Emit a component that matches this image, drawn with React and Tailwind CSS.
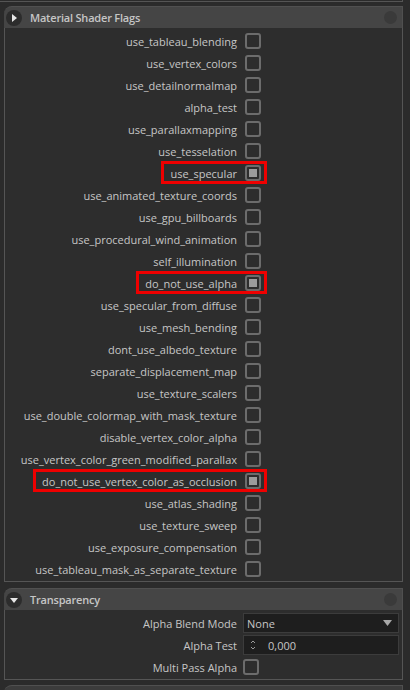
import React from "react";

const flags = [
  ["use_tableau_blending", false, false],
  ["use_vertex_colors", false, false],
  ["use_detailnormalmap", false, false],
  ["alpha_test", false, false],
  ["use_parallaxmapping", false, false],
  ["use_tesselation", false, false],
  ["use_specular", true, true],
  ["use_animated_texture_coords", false, false],
  ["use_gpu_billboards", false, false],
  ["use_procedural_wind_animation", false, false],
  ["self_illumination", false, false],
  ["do_not_use_alpha", true, true],
  ["use_specular_from_diffuse", false, false],
  ["use_mesh_bending", false, false],
  ["dont_use_albedo_texture", false, false],
  ["separate_displacement_map", false, false],
  ["use_texture_scalers", false, false],
  ["use_double_colormap_with_mask_texture", false, false],
  ["disable_vertex_color_alpha", false, false],
  ["use_vertex_color_green_modified_parallax", false, false],
  ["do_not_use_vertex_color_as_occlusion", true, true],
  ["use_atlas_shading", false, false],
  ["use_texture_sweep", false, false],
  ["use_exposure_compensation", false, false],
  ["use_tableau_mask_as_separate_texture", false, false],
];

function Checkbox({ checked }) {
  return (
    <div className="w-4 h-4 shrink-0 rounded-[3px] border-2 border-[#6c6c6c] flex items-center justify-center">
      {checked && <div className="w-2 h-2 bg-[#9c9c9c]" />}
    </div>
  );
}

function FlagRow({ label, checked, highlight }) {
  return (
    <div className="h-[22px] flex items-center justify-end w-[256px]">
      <div className="relative flex items-center gap-2 h-full">
        <span className="text-[11px] text-[#c6c6c6] leading-none">{label}</span>
        <Checkbox checked={checked} />
        {highlight && (
          <span className="absolute -left-[9px] -right-[6px] top-[-1px] bottom-0 border-[3px] border-[#ee0000]" />
        )}
      </div>
    </div>
  );
}

function Header({ title, open }) {
  return (
    <div className="h-[22px] bg-[#454545] rounded-tl-[8px] border-t border-r border-[#505050] flex items-center pl-[2px] pr-[5px]">
      <div className="w-4 h-4 rounded-full bg-[#2c2c2c] flex items-center justify-center">
        {open ? (
          <svg width="10" height="10" viewBox="0 0 10 10">
            <path d="M1 3 L9 3 L5 8 Z" fill="#e6e6e6" />
          </svg>
        ) : (
          <svg width="10" height="10" viewBox="0 0 10 10">
            <path d="M3 1 L8 5 L3 9 Z" fill="#e6e6e6" />
          </svg>
        )}
      </div>
      <span className="ml-[8px] text-[11px] font-semibold tracking-[-0.2px] text-[#c6c6c6] leading-none">{title}</span>
      <div className="ml-auto w-[13px] h-[13px] rounded-full bg-[#3a3a3a]" />
    </div>
  );
}

function PropRow({ label, children }) {
  return (
    <div className="h-[22px] flex items-center">
      <div className="w-[232px] text-right text-[11px] text-[#c6c6c6] leading-none">{label}</div>
      <div className="ml-[6px] flex-1 pr-[3px] flex items-center">{children}</div>
    </div>
  );
}

export default function App() {
  return (
    <div
      className="w-[410px] h-[690px] bg-[#2b2b2b] overflow-hidden"
      style={{ fontFamily: '"Open Sans", "Noto Sans", sans-serif' }}
    >
      <div className="h-[2px] w-[403px] border-b border-r border-[#555555]" />
      <div className="ml-[4px] w-[399px] mt-[4px]">
        <Header title="Material Shader Flags" open={false} />
        <div className="border-l border-r border-b border-[#555555] bg-[#2d2d2d] pt-[2px] pb-[1px]">
          {flags.map(([l, c, h]) => (
            <FlagRow key={l} label={l} checked={c} highlight={h} />
          ))}
        </div>
      </div>
      <div className="ml-[4px] w-[399px] mt-[6px]">
        <Header title="Transparency" open={true} />
        <div className="border-l border-r border-b border-[#555555] bg-[#2d2d2d] pt-[2px] pb-[1px]">
          <PropRow label="Alpha Blend Mode">
            <div className="h-[20px] flex-1 bg-[#1e1e1e] border border-[#3c3c3c] flex items-center pl-[3px] pr-[6px]">
              <span className="text-[11px] text-[#c6c6c6] leading-none">None</span>
              <svg className="ml-auto" width="9" height="6" viewBox="0 0 9 6">
                <path d="M0 0 L9 0 L4.5 6 Z" fill="#a8a8a8" />
              </svg>
            </div>
          </PropRow>
          <PropRow label="Alpha Test">
            <div className="h-[20px] flex-1 bg-[#1e1e1e] border border-[#3c3c3c] flex items-center pl-[6px]">
              <svg width="6" height="12" viewBox="0 0 6 12">
                <path d="M1 4 L3 2 L5 4" stroke="#9a9a9a" strokeWidth="1" fill="none" />
                <path d="M1 8 L3 10 L5 8" stroke="#9a9a9a" strokeWidth="1" fill="none" />
              </svg>
              <span className="ml-[12px] text-[11px] text-[#c6c6c6] leading-none">0,000</span>
            </div>
          </PropRow>
          <PropRow label="Multi Pass Alpha">
            <Checkbox checked={false} />
          </PropRow>
        </div>
      </div>
      <div className="ml-[4px] w-[399px] mt-[5px]">
        <div className="h-[22px] bg-[#3c3c3c] rounded-tl-[8px] border-t border-r border-[#505050]" />
      </div>
    </div>
  );
}
